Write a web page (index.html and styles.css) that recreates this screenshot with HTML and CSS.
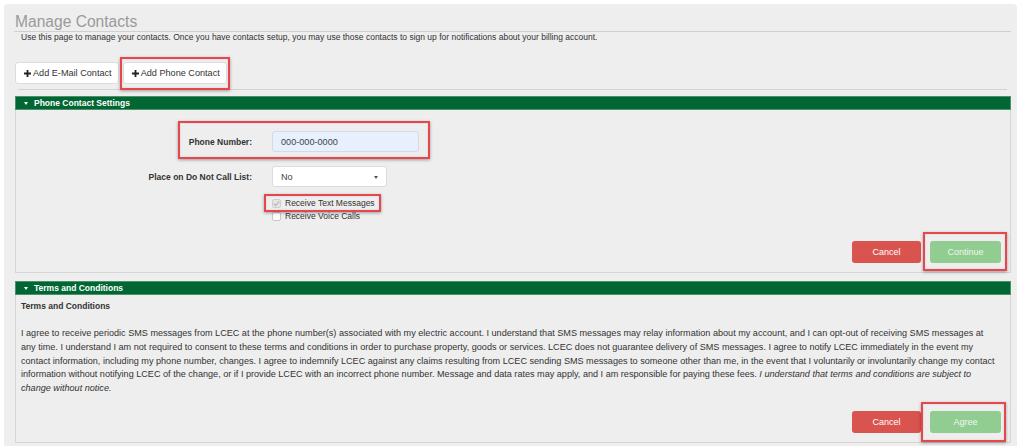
FILE: index.html
```html
<!DOCTYPE html>
<html lang="en">
<head>
<meta charset="utf-8">
<title>Manage Contacts</title>
<link rel="stylesheet" href="styles.css">
</head>
<body>
<div class="page">
  <h1 class="title">Manage Contacts</h1>
  <p class="intro">Use this page to manage your contacts. Once you have contacts setup, you may use those contacts to sign up for notifications about your billing account.</p>

  <div class="tabs">
    <button class="tab"><svg class="plus" viewBox="0 0 7 7" width="7" height="7"><path d="M2.6 0h1.8v2.6H7v1.8H4.4V7H2.6V4.4H0V2.6h2.6z" fill="#222"/></svg>Add E-Mail Contact</button>
    <button class="tab hl hl-tab"><svg class="plus" viewBox="0 0 7 7" width="7" height="7"><path d="M2.6 0h1.8v2.6H7v1.8H4.4V7H2.6V4.4H0V2.6h2.6z" fill="#222"/></svg>Add Phone Contact</button>
  </div>
  <div class="rule"></div>

  <section class="panel">
    <div class="panel-head"><span class="caret"></span>Phone Contact Settings</div>
    <div class="panel-body form-body">
      <div class="hl hl-row phone-row">
        <label class="lbl lbl-short">Phone Number:</label>
        <div class="input">000-000-0000</div>
      </div>
      <div class="field">
        <label class="lbl">Place on Do Not Call List:</label>
        <div class="select">No<span class="sel-caret"></span></div>
      </div>
      <div class="checks">
        <label class="check hl hl-check"><span class="box checked"><svg viewBox="0 0 9 9" width="9" height="9"><path d="M1.8 4.6l1.8 1.9 3.8-4" fill="none" stroke="#bdbdbd" stroke-width="1.4"/></svg></span>Receive Text Messages</label>
        <label class="check check2"><span class="box"></span>Receive Voice Calls</label>
      </div>
      <div class="actions">
        <button class="btn btn-cancel">Cancel</button>
        <button class="btn btn-ok hl hl-cont">Continue</button>
      </div>
    </div>
  </section>

  <section class="panel panel2">
    <div class="panel-head"><span class="caret"></span>Terms and Conditions</div>
    <div class="panel-body terms-body">
      <div class="terms-title">Terms and Conditions</div>
      <p class="terms">I agree to receive periodic SMS messages from LCEC at the phone number(s) associated with my electric account. I understand that SMS messages may relay information about my account, and I can opt-out of receiving SMS messages at any time. I understand I am not required to consent to these terms and conditions in order to purchase property, goods or services. LCEC does not guarantee delivery of SMS messages. I agree to notify LCEC immediately in the event my contact information, including my phone number, changes. I agree to indemnify LCEC against any claims resulting from LCEC sending SMS messages to someone other than me, in the event that I voluntarily or involuntarily change my contact information without notifying LCEC of the change, or if I provide LCEC with an incorrect phone number. Message and data rates may apply, and I am responsible for paying these fees. <em>I understand that terms and conditions are subject to change without notice.</em></p>
      <div class="actions actions2">
        <button class="btn btn-cancel">Cancel</button>
        <button class="btn btn-ok hl hl-agree">Agree</button>
      </div>
    </div>
  </section>
</div>
</body>
</html>
```

FILE: styles.css
```css
* { box-sizing: border-box; }
html, body { margin: 0; padding: 0; background: #fff; }
body {
  font-family: "Liberation Sans", Arial, sans-serif;
  font-size: 8.5px;
  color: #333;
}
.page {
  margin: 4px 7px 0 4px;
  padding: 8px 6px 10px 11px;
  background: #eeeeee;
  border-radius: 4px;
  min-height: 442px;
}
.title {
  margin: 0;
  font-size: 15.6px;
  font-weight: normal;
  color: #9a9a9a;
  line-height: 19px;
  border-bottom: 1px solid #d0d0d0;
  margin-left: -1px;
  padding-left: 1px;
}
.intro {
  margin: 0;
  padding-left: 6px;
  line-height: 10px;
  color: #333;
}
.tabs {
  display: flex;
  gap: 4px;
  margin-top: 20px;
}
.tab {
  display: inline-flex;
  align-items: center;
  height: 22px;
  padding: 0 6px 0 8px;
  background: #fff;
  border: 1px solid #dcdcdc;
  border-radius: 3px;
  font: inherit;
  font-size: 9.15px;
  color: #333;
}
.plus { margin-right: 2px; }
.rule {
  margin: 5px 4px 0 3px;
  border-top: 1px solid #d2d2d2;
}
.panel { margin-top: 6px; }
.panel2 { margin-top: 8px; }
.panel-head {
  display: flex;
  align-items: center;
  height: 14px;
  padding-left: 8px;
  background: #006633;
  border: 1px solid #4e9068;
  color: #fff;
  font-weight: bold;
  line-height: 12px;
}
.caret {
  width: 0; height: 0;
  border-left: 2.5px solid transparent;
  border-right: 2.5px solid transparent;
  border-top: 3px solid #fff;
  margin-right: 6px;
}
.panel-body {
  border: 1px solid #d6d6d6;
  border-top: 0;
  background: #eeeeee;
}
.form-body {
  padding: 13px 9px 9px 0;
  display: flex;
  flex-direction: column;
}
.phone-row {
  align-self: flex-start;
  display: flex;
  align-items: center;
  margin-left: 164px;
  padding: 8px 9px 5px 0;
}
.field {
  display: flex;
  align-items: center;
  margin-top: 9px;
}
.lbl {
  font-weight: bold;
  text-align: right;
  width: 236px;
  flex: 0 0 auto;
  margin-right: 20px;
}
.lbl-short { width: 72px; }
.input {
  width: 147px;
  height: 21px;
  padding-left: 8px;
  display: flex;
  align-items: center;
  background: #e8f0fe;
  border: 1px solid #d3dbe6;
  border-radius: 3px;
  color: #444;
  font-size: 9.15px;
}
.select {
  position: relative;
  width: 115px;
  height: 21px;
  padding-left: 8px;
  display: flex;
  align-items: center;
  background: #fff;
  border: 1px solid #dcdcdc;
  border-radius: 3px;
  color: #444;
  font-size: 9.15px;
}
.sel-caret {
  position: absolute;
  right: 8px;
  top: 9px;
  width: 0; height: 0;
  border-left: 2.5px solid transparent;
  border-right: 2.5px solid transparent;
  border-top: 3px solid #555;
}
.checks {
  display: flex;
  flex-direction: column;
  align-items: flex-start;
  margin-left: 256px;
  margin-top: 9px;
}
.check {
  display: inline-flex;
  align-items: center;
  line-height: 14px;
  height: 14px;
  padding-right: 1px;
}
.check2 { height: 13px; line-height: 13px; }
.box {
  width: 9px; height: 9px;
  border: 1px solid #c6c6c6;
  border-radius: 2px;
  background: #fff;
  margin-right: 4px;
  display: inline-flex;
}
.box.checked { background: #e6e6e6; border-color: #cfcfcf; }
.box svg { margin: -1px; }
.actions {
  display: flex;
  justify-content: flex-end;
  gap: 9px;
  margin-top: 18px;
}
.btn {
  height: 22px;
  border: 0;
  border-radius: 3px;
  font: inherit;
  font-size: 9px;
  color: #fff;
  padding: 0;
}
.btn-cancel { width: 69px; background: #d9534f; }
.btn-ok { width: 71px; background: #91cd91; color: #eef7ee; }
.terms-body { padding: 5px 9px 9px 5px; }
.terms-title { font-weight: bold; line-height: 13.75px; }
.terms {
  margin: 13.25px 0 0;
  line-height: 13.75px;
  font-size: 9.1px;
  padding-right: 1px;
}
.actions2 { margin-top: 15px; }

/* red annotation boxes drawn over the content */
.hl { position: relative; }
.hl::after {
  content: "";
  position: absolute;
  border: 2px solid #e4484c;
  box-shadow: 0 1px 3px rgba(0,0,0,0.35), inset 0 0 2px rgba(0,0,0,0.15);
  pointer-events: none;
}
.hl-tab::after { top: -6px; right: -4px; bottom: -7px; left: -4px; }
.hl-row::after { top: -2px; right: -2px; bottom: -2px; left: -2px; }
.hl-check::after { top: -2px; right: -5px; bottom: -2px; left: -8px; }
.hl-cont::after { top: -9px; right: -6px; bottom: -8px; left: -7px; }
.hl-agree::after { top: -9px; right: -5px; bottom: -9px; left: -9px; }
```
